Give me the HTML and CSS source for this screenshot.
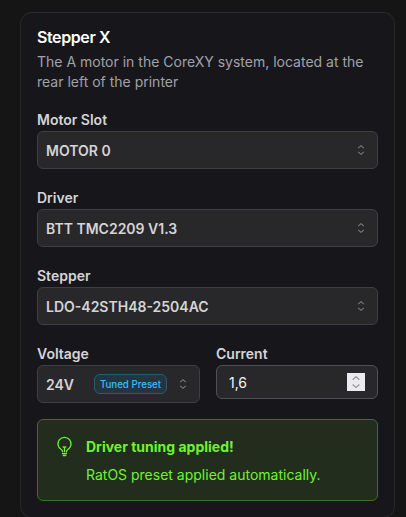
FILE: index.html
```html
<!DOCTYPE html>
<html lang="en">
<head>
<meta charset="utf-8">
<title>Stepper X</title>
<link rel="stylesheet" href="styles.css">
</head>
<body>
<svg class="defs" width="0" height="0" aria-hidden="true">
  <symbol id="chevrons" viewBox="0 0 16 16">
    <path d="M5.2 6.1 8 3.7l2.8 2.4M5.2 9.9 8 12.3l2.8-2.4"/>
  </symbol>
  <symbol id="chevrons-large" viewBox="0 0 18 18">
    <path d="M5.6 6.8 9 3.8l3.4 3M5.6 11.4l3.4 3 3.4-3"/>
  </symbol>
</svg>
<main class="card">
  <header class="card-header">
    <h1 class="title">Stepper X</h1>
    <p class="description">The A motor in the CoreXY system, located at the rear left of the printer</p>
  </header>
  <div class="field">
    <span class="label">Motor Slot</span>
    <button class="select"><span class="value">MOTOR 0</span><svg class="chevrons"><use href="#chevrons"/></svg></button>
  </div>
  <div class="field">
    <span class="label">Driver</span>
    <button class="select"><span class="value">BTT TMC2209 V1.3</span><svg class="chevrons"><use href="#chevrons"/></svg></button>
  </div>
  <div class="field">
    <span class="label">Stepper</span>
    <button class="select"><span class="value">LDO-42STH48-2504AC</span><svg class="chevrons"><use href="#chevrons"/></svg></button>
  </div>
  <div class="row">
    <div class="field">
      <span class="label">Voltage</span>
      <button class="select"><span class="value">24V</span><span class="badge">Tuned Preset</span><svg class="chevrons"><use href="#chevrons"/></svg></button>
    </div>
    <div class="field">
      <span class="label">Current</span>
      <div class="input"><span class="number">1,6</span><span class="spinner"><svg class="chevrons"><use href="#chevrons-large"/></svg></span></div>
    </div>
  </div>
  <section class="alert">
    <svg class="bulb" viewBox="0 0 24 24">
      <path d="M12 18v-5.25m0 0a6 6 0 0 0 1.5-.19m-1.5.19a6 6 0 0 1-1.5-.19m3.75 7.48a12.06 12.06 0 0 1-4.5 0m3.75 2.38a14.4 14.4 0 0 1-3 0M14.25 18v-.19c0-.98.66-1.82 1.51-2.32a7.5 7.5 0 1 0-7.52 0c.85.5 1.51 1.34 1.51 2.32V18"/>
    </svg>
    <div class="alert-text">
      <h2 class="alert-title">Driver tuning applied!</h2>
      <p class="alert-body">RatOS preset applied automatically.</p>
    </div>
  </section>
</main>
</body>
</html>
```
FILE: styles.css
```css
* { box-sizing: border-box; margin: 0; }
body {
  height: 517px;
  overflow: hidden;
  padding: 12px 11px 0 20px;
  background: #151516;
  color: #d4d4d8;
  font: 14px/20px Inter, "Liberation Sans", sans-serif;
}
.defs { position: absolute; }
.card {
  height: 506px;
  padding: 12px 16px 16px;
  border: 1px solid #27272a;
  border-top-color: #2d2d30;
  border-radius: 12px;
  background: #17171b;
}
.title { font-size: 16px; line-height: 24px; font-weight: 600; letter-spacing: -0.4px; color: #fff; }
.description { margin-top: 3px; color: #a1a1aa; }
.card-header { margin-bottom: 16px; }
.field { margin-bottom: 17px; }
.label { display: block; height: 24px; margin-bottom: -1px; line-height: 24px; font-weight: 600; }
.select {
  display: flex;
  align-items: center;
  width: 100%;
  height: 38px;
  padding: 0 8px;
  border: 1px solid #3f3f43;
  border-radius: 6px;
  background: #28282a;
  color: #d4d4d8;
  font: 600 14px/20px Inter, "Liberation Sans", sans-serif;
  text-align: left;
}
.value { flex: 1; padding-top: 2px; }
.chevrons {
  width: 16px;
  height: 16px;
  fill: none;
  stroke: #7b7b80;
  stroke-width: 1.1;
}
.row { display: grid; grid-template-columns: 163px 162px; gap: 16px; }
.row .field { margin-bottom: 16px; }
.badge {
  width: 73px;
  height: 20px;
  margin-right: 8px;
  border: 1px solid #285b78;
  border-radius: 6px;
  background: #253540;
  color: #38bdf8;
  font-size: 9.7px;
  font-weight: 500;
  line-height: 20px;
  text-align: center;
  white-space: nowrap;
}
.input {
  display: flex;
  align-items: center;
  height: 34px;
  padding: 0 12px;
  border: 1px solid #515155;
  border-radius: 6px;
  background: #28282a;
  color: #f4f4f5;
}
.number { flex: 1; padding-top: 2px; }
.spinner { width: 18px; height: 18px; background: #ebebef; }
.spinner .chevrons { display: block; width: 18px; height: 18px; stroke: #9a9aa5; stroke-width: 1.4; }
.alert {
  display: flex;
  height: 82px;
  padding: 15px;
  border: 1px solid #397321;
  border-radius: 6px;
  background: #232d1e;
  color: #6bf52f;
}
.bulb { width: 21px; height: 21px; margin: 1px 0 0 .5px; fill: none; stroke: currentColor; stroke-width: 1.5; stroke-linecap: round; stroke-linejoin: round; }
.alert-text { margin-left: 11.5px; padding-top: 2px; }
.alert-title { font-size: 14px; line-height: 20px; font-weight: 700; }
.alert-body { margin-top: 8px; }
```
